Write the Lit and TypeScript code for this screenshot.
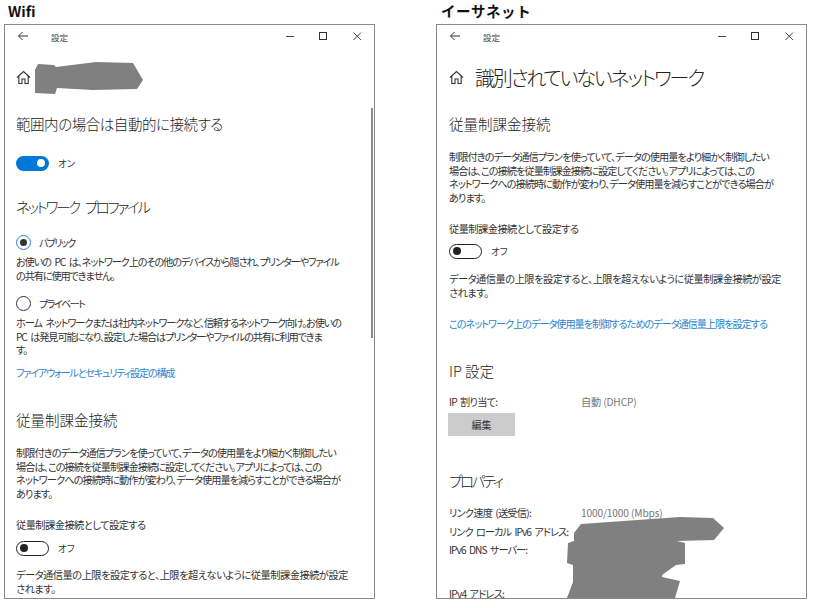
import { LitElement, html, css } from "lit";
import { customElement } from "lit/decorators.js";

@customElement("app-root")
export class AppRoot extends LitElement {
  static styles = css`
    :host { display: block; width: 818px; height: 608px; background: #fff; overflow: hidden;
      font-family: "Noto Sans CJK JP", "Noto Sans", sans-serif; font-feature-settings: "palt"; color: #2b2b2b; }
    .page { display: flex; align-items: flex-start; padding-left: 4px; gap: 61px; }
    .col { width: 371px; display: flex; flex-direction: column; }
    .cap { font: bold 14.5px/22px "Noto Sans CJK JP", sans-serif; height: 24px; padding-left: 4px; color: #111; }
    .cap.j { letter-spacing: 0.6px; padding-left: 5px; }
    .win { position: relative; box-sizing: border-box; height: 575px; border: 1px solid #8a8a8a; overflow: hidden; padding: 0 12px 0 11px; }
    .e2 { padding-left: 12px; }
    .tb { height: 23px; margin: 0 -12px 0 -11px; position: relative; display: flex; align-items: center; font-size: 8.5px; padding-left: 46px; color: #444; }
    .e2 .tb { margin-left: -12px; }
    .tb svg { position: absolute; top: 5px; }
    .home { display: flex; align-items: center; height: 31px; margin-top: 14px; gap: 11px; font-size: 20px; font-weight: 300; color: #222; }
    .home svg { flex: none; }
    .home span { letter-spacing: -2.2px; }
    h2 { margin: 0; font-weight: 300; font-size: 14.5px; line-height: 20px; height: 20px; white-space: nowrap; color: #222; }
    h2.a { letter-spacing: -0.45px; }
    h2.b { letter-spacing: -2.3px; word-spacing: 5px; }
    h2.c { letter-spacing: -2.4px; }
    p { margin: 0; font-size: 10.2px; line-height: 13.5px; white-space: nowrap; font-weight: 400; color: #333; letter-spacing: -0.95px; }
    p.tight { letter-spacing: -0.46px; }
    p.sp { letter-spacing: -1.15px; word-spacing: 2.5px; }
    .l { font-size: 10.2px; line-height: 14px; white-space: nowrap; color: #333; letter-spacing: -0.5px; }
    .link { color: #2a84d2; letter-spacing: -1.05px; }
    .link.x { letter-spacing: -1.3px; }
    .sw { display: flex; align-items: center; height: 20px; gap: 9px; font-size: 9.5px; color: #333; }
    .t { box-sizing: border-box; width: 33px; height: 15px; border-radius: 8px; position: relative; flex: none; }
    .t.on { background: #0078d7; }
    .t.off { border: 1.5px solid #222; }
    .t i { position: absolute; width: 8px; height: 8px; border-radius: 50%; top: 50%; transform: translateY(-50%); }
    .t.on i { right: 4px; background: #fff; }
    .t.off i { left: 3px; background: #222; }
    .rd { display: flex; align-items: center; height: 16px; gap: 8px; font-size: 10px; color: #333; letter-spacing: -1.5px; }
    .r { box-sizing: border-box; width: 15px; height: 15px; border-radius: 50%; border: 1.5px solid #333; flex: none; display: flex; align-items: center; justify-content: center; }
    .r.sel { border-color: #2a84d2; }
    .r.sel i { width: 7px; height: 7px; border-radius: 50%; background: #333; }
    .row { display: flex; letter-spacing: -0.75px; word-spacing: 1.5px; }
    .row.n { letter-spacing: -0.95px; word-spacing: 2px; }
    .row .k { width: 132px; flex: none; }
    .row .v { color: #767676; letter-spacing: -0.15px; word-spacing: 0; }
    .btn { width: 67px; height: 23px; background: #ccc; display: flex; align-items: center; justify-content: center; font-size: 10px; color: #333; margin-left: -1px; }
    .sb { position: absolute; right: 1px; top: 83px; width: 2px; height: 230px; background: #8c8c8c; }
    .blob { position: absolute; left: 0; top: 0; width: 369px; height: 573px; }
    .m4 { margin-top: 4px; } .m5 { margin-top: 5px; } .m6 { margin-top: 6px; } .m9 { margin-top: 9.5px; }
    .m10 { margin-top: 10px; } .m11 { margin-top: 11px; } .m13 { margin-top: 13px; } .m14 { margin-top: 14px; }
    .m15 { margin-top: 15px; } .m16 { margin-top: 16px; } .m17 { margin-top: 17px; } .m18 { margin-top: 18px; }
    .m19 { margin-top: 19px; } .m21 { margin-top: 21px; } .m24 { margin-top: 24px; } .m30 { margin-top: 30px; } .m35 { margin-top: 35px; }
  `;

  private titleBar() {
    return html`<div class="tb">設定
      <svg style="left:12px" width="12" height="12" viewBox="0 0 12 12" fill="none" stroke="#333" stroke-width="1"><path d="M11 6H1.5M5.5 2 1.5 6l4 4"/></svg>
      <svg style="left:280px" width="10" height="12" viewBox="0 0 10 12" fill="none" stroke="#444" stroke-width="1"><path d="M1 6.5h8"/></svg>
      <svg style="left:313px" width="10" height="12" viewBox="0 0 10 12" fill="none" stroke="#333" stroke-width="1"><rect x="1.5" y="2.5" width="7" height="7"/></svg>
      <svg style="left:347px" width="11" height="12" viewBox="0 0 11 12" fill="none" stroke="#444" stroke-width="1"><path d="M1.5 2.5l7.5 7.5M9 2.5 1.5 10"/></svg>
    </div>`;
  }

  private homeIcon() {
    return html`<svg width="15" height="15" viewBox="0 0 15 15" fill="none" stroke="#333" stroke-width="1.1"><path d="M1 7.5 7.5 1.5 14 7.5M2.8 6.2V13.5H6V9h3v4.5h3.2V6.2"/></svg>`;
  }

  private metered() {
    return html`
      <p class="m16">制限付きのデータ通信プランを使っていて、データの使用量をより細かく制御したい<br>場合は、この接続を従量制課金接続に設定してください。アプリによっては、この<br>ネットワークへの接続時に動作が変わり、データ使用量を減らすことができる場合が<br>あります。</p>
      <div class="l m18">従量制課金接続として設定する</div>`;
  }

  render() {
    return html`<div class="page">
      <div class="col">
        <div class="cap">Wifi</div>
        <div class="win">
          ${this.titleBar()}
          <div class="home">${this.homeIcon()}</div>
          <h2 class="a m21">範囲内の場合は自動的に接続する</h2>
          <div class="sw m19"><span class="t on"><i></i></span>オン</div>
          <h2 class="b m24">ネットワーク プロファイル</h2>
          <div class="rd m17"><span class="r sel"><i></i></span>パブリック</div>
          <p class="sp m5">お使いの PC は、ネットワーク上のその他のデバイスから隠され、プリンターやファイル<br>の共有に使用できません。</p>
          <div class="rd m13"><span class="r"></span>プライベート</div>
          <p class="sp m5">ホーム ネットワークまたは社内ネットワークなど、信頼するネットワーク向け。お使いの<br>PC は発見可能になり、設定した場合はプリンターやファイルの共有に利用できま<br>す。</p>
          <div class="l link x m9">ファイアウォールとセキュリティ設定の構成</div>
          <h2 class="m30">従量制課金接続</h2>
          ${this.metered()}
          <div class="sw m6"><span class="t off"><i></i></span>オフ</div>
          <p class="tight m10">データ通信量の上限を設定すると、上限を超えないように従量制課金接続が設定<br>されます。</p>
          <div class="sb"></div>
          <svg class="blob" viewBox="5 25 369 573"><path fill="#808080" d="M35 70 38 64 54 65 56 67 96 62 133 63 143 80 137 89 93 90 57 88 55 94 35 93Z"/></svg>
        </div>
      </div>
      <div class="col">
        <div class="cap j">イーサネット</div>
        <div class="win e2">
          ${this.titleBar()}
          <div class="home">${this.homeIcon()}<span>識別されていないネットワーク</span></div>
          <h2 class="m21">従量制課金接続</h2>
          ${this.metered()}
          <div class="sw m5"><span class="t off"><i></i></span>オフ</div>
          <p class="tight m11">データ通信量の上限を設定すると、上限を超えないように従量制課金接続が設定<br>されます。</p>
          <div class="l link m18">このネットワーク上のデータ使用量を制御するためのデータ通信量上限を設定する</div>
          <h2 class="m30">IP 設定</h2>
          <div class="l row m14"><span class="k">IP 割り当て:</span><span class="v">自動 (DHCP)</span></div>
          <div class="btn m4">編集</div>
          <h2 class="c m35">プロパティ</h2>
          <div class="l row m15"><span class="k">リンク速度 (送受信):</span><span class="v">1000/1000 (Mbps)</span></div>
          <div class="l row n m5"><span class="k">リンク ローカル IPv6 アドレス:</span></div>
          <div class="l row n m4"><span class="k">IPv6 DNS サーバー:</span></div>
          <div class="l row m30"><span class="k">IPv4 アドレス:</span></div>
          <svg class="blob" viewBox="437 25 369 573"><path fill="#808080" d="M574 533 581 524 680 517 713 518 724 528 714 540 677 541 685 543 685 564 676 565 662 575 662 577 680 581 675 598 567 598 573 582 573 565 567 563 568 543 574 541Z"/></svg>
        </div>
      </div>
    </div>`;
  }
}
